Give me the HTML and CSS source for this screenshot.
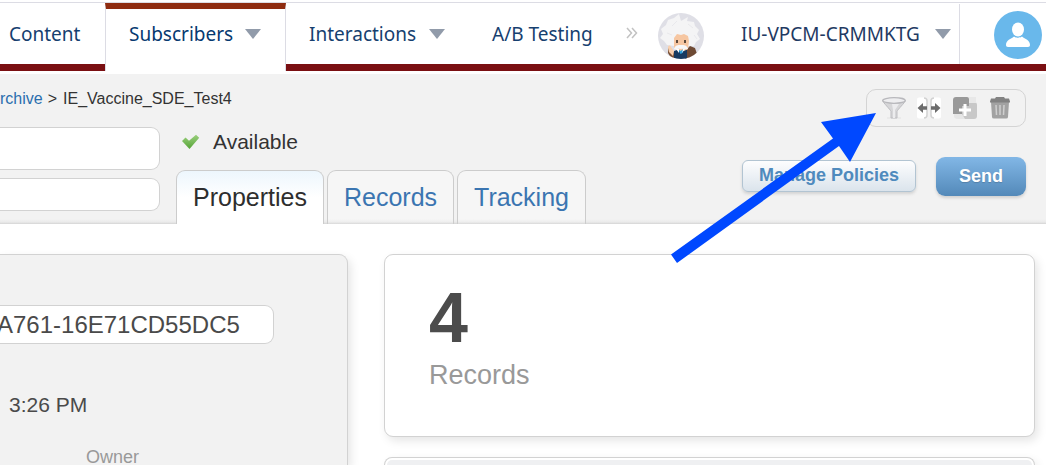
FILE: index.html
```html
<!DOCTYPE html>
<html lang="en">
<head>
<meta charset="utf-8">
<title>IE_Vaccine_SDE_Test4</title>
<link rel="stylesheet" href="styles.css">
</head>
<body>
<div class="page">
  <nav class="nav">
    <a class="nav-item nav-first" href="#">Content</a>
    <a class="nav-item nav-active" href="#">Subscribers <span class="caret"></span></a>
    <a class="nav-item nav-drop" href="#">Interactions <span class="caret"></span></a>
    <a class="nav-item nav-plain" href="#">A/B Testing</a>
    <div class="nav-item nav-end">
      <button class="more" type="button" aria-label="More">
        <svg width="12" height="13" viewBox="0 0 12 13"><path d="M1 1l4.500 5L1 11M6 1l4.500 5L6 11" fill="none" stroke="#c2c2c2" stroke-width="1.500"/></svg>
      </button>
      <svg class="avatar" width="46" height="46" viewBox="0 0 46 46">
        <defs><clipPath id="disc"><circle cx="23" cy="23" r="23"/></clipPath></defs>
        <circle cx="23" cy="23" r="23" fill="#dfdfe6"/>
        <g clip-path="url(#disc)">
          <path d="M27 46l1-9 4-4 5 2 2 6-4 5z" fill="#6e4a34"/>
          <path d="M10 34l4 3 3 4v4h-4l-3-5z" fill="#7a5238"/>
          <path d="M16 38l6-2 7 1v10H16z" fill="#173a60"/>
          <path d="M21 1l2 7 7-4-1 4 7 1 1 4 4 4-2 4 3 5-4 3-2 4-7 0-13 0-7-1-3-4-4-3 3-4-2-5 5-4 2-5 6-2z" fill="#f4f4f5"/>
          <path d="M14 13l5-5M30 11l5 4M9 20l5 2M36 22l3 4" stroke="#e8e8ec" fill="none"/>
          <path d="M16 25l3-4 4 1 3-1 4 2 1 5-1 8-4 2h-5l-5-3z" fill="#f6c6a1"/>
          <rect x="18" y="27" width="2" height="3" fill="#5e4a3c"/>
          <rect x="26" y="27" width="2" height="3" fill="#5e4a3c"/>
          <path d="M16 36c1-4 4-4 7-4s6 0 7 4c-2 1-5-1-7 0-3-1-5 1-7 0z" fill="#f7f7f8"/>
          <path d="M10 35c0-3 2-3 3-1l3 4-1 5-4-4z" fill="#f9d0ae"/>
          <path d="M20 36l2.500 2 3-2-1 4-2 1z" fill="#2aa0dc"/>
          <path d="M18 36h3l0 4zM27 36h-2l-1 4z" fill="#fff"/>
        </g>
      </svg>
      <button class="account" type="button">IU-VPCM-CRMMKTG <span class="caret"></span></button>
      <span class="rule"></span>
      <svg class="user" width="48" height="48" viewBox="0 0 48 48">
        <circle cx="24" cy="24" r="24" fill="#69b8eb"/>
        <ellipse cx="24" cy="18.500" rx="6" ry="7" fill="#fff"/>
        <path d="M12 34c0-5 5-6 8-8.500 2 1.600 6 1.600 8 0 3 2.500 8 3.500 8 8.500 0 1.300-.7 2-2 2H14c-1.300 0-2-.7-2-2z" fill="#fff"/>
      </svg>
    </div>
  </nav>

  <header class="head">
    <div class="head-main">
      <div class="crumbs"><a href="#">rchive</a><span class="sep">&gt;</span><span>IE_Vaccine_SDE_Test4</span></div>
      <div class="head-row">
        <div class="fields">
          <input class="field field-name" type="text" aria-label="Name">
          <input class="field field-desc" type="text" aria-label="Description">
        </div>
        <div class="head-side">
          <div class="status">
            <svg width="18" height="16" viewBox="0 0 18 16"><defs><linearGradient id="ok" x1="0" y1="0" x2="0" y2="1"><stop offset="0" stop-color="#9bd07e"/><stop offset="1" stop-color="#55a336"/></linearGradient></defs><path d="M0 7L3.500 3.500l3.500 3.200L14 0.700l3.200 3L7.500 15z" fill="url(#ok)"/></svg>
            <span>Available</span>
          </div>
          <div class="tabs">
            <button class="tab tab-on" type="button">Properties</button>
            <button class="tab" type="button">Records</button>
            <button class="tab" type="button">Tracking</button>
          </div>
        </div>
      </div>
    </div>
    <div class="head-actions">
      <div class="tools">
        <button type="button" aria-label="Filter"><svg width="24" height="22" viewBox="0 0 24 22"><path d="M5 21h14" stroke="#e2e2e2"/><path d="M0.700 3.500c0 2 7.800 9 8.300 11V21h6v-6.500c.5-2 8.300-9 8.300-11z" fill="#d6d6d8" stroke="#bdbdc1"/><path d="M11 13v8h2v-8l4-6h-7z" fill="#ececee"/><ellipse cx="12" cy="3.500" rx="11.300" ry="2.800" fill="#eeeef0" stroke="#b8b8bc" stroke-width="1.300"/></svg></button>
        <button type="button" aria-label="Split"><svg width="24" height="22" viewBox="0 0 24 22"><rect x="0" y="0.500" width="10" height="21" rx="2" fill="#fff"/><rect x="14" y="0.500" width="10" height="21" rx="2" fill="#fff"/><path d="M7 1q3 0 3 3v14q0 3-3 3M17 1q-3 0-3 3v14q0 3 3 3" fill="none" stroke="#d2d2d2" stroke-width="1.500"/><path d="M0.500 11l5.500-5v3.300h4v3.400H6V16zM23.500 11l-5.500-5v3.300h-4v3.400h4V16z" fill="#6c6c6c"/></svg></button>
        <button type="button" aria-label="Copy"><svg width="24" height="22" viewBox="0 0 24 22"><rect x="6" y="5" width="18" height="17" rx="3" fill="#c8c8c8"/><path d="M16 0h7v6h-7z" fill="#e8e8e8"/><path d="M3 0h11q2 0 2 2v7H9v8H0V3q0-3 3-3z" fill="#999"/><path d="M1 17h8l3 5H5q-4 0-4-3z" fill="#e6e6e6"/><path d="M12 7v12M6 13h12" stroke="#fff" stroke-width="3"/></svg></button>
        <button type="button" aria-label="Delete"><svg width="24" height="22" viewBox="0 0 24 22"><path d="M3 5h18l-1 15q0 1.500-2 1.500H6q-2 0-2-1.500z" fill="#a2a2a2"/><path d="M3 1.500h4L8 0h8l1 1.500h4l1 3v1H2v-1z" fill="#828282"/><path d="M8 8l.5 10M12 8v10M16 8l-.5 10" stroke="#cfcfcf" stroke-width="1.500"/></svg></button>
      </div>
      <div class="buttons">
        <button class="btn-policies" type="button">Manage Policies</button>
        <button class="btn-send" type="button">Send</button>
      </div>
    </div>
  </header>

  <main class="content">
    <section class="card details">
      <input class="key" type="text" value="A761-16E71CD55DC5" aria-label="External key">
      <div class="time">3:26 PM</div>
      <div class="owner">Owner</div>
    </section>
    <div class="stats">
      <section class="card count">
        <div class="number">4</div>
        <div class="caption">Records</div>
      </section>
      <section class="card panel"><div class="panel-head"></div></section>
    </div>
  </main>

  <svg class="pointer" width="206" height="152" viewBox="0 0 206 152"><path d="M206 0L151 9l12 16.500L1 141.500l6 8.500L169 33l11 16z" fill="#0048ff"/></svg>
</div>
</body>
</html>
```
FILE: styles.css
```css
* { box-sizing: border-box; }
body { margin: 0; background: #fff; font-family: "Liberation Sans", Arial, sans-serif; color: #333; }
button { border: 0; padding: 0; margin: 0; background: none; font: inherit; color: inherit; cursor: pointer; }
input { font: inherit; }
a { text-decoration: none; color: #2a6eae; }
svg { display: block; flex: none; }
.page { position: relative; height: 100vh; overflow: hidden; display: flex; flex-direction: column; }

.nav { display: flex; flex: none; margin-top: 2px; border-top: 1px solid #dcdce4; font: 19px/24px "Noto Sans", sans-serif; }
.nav-item { display: flex; align-items: center; height: 68px; border-bottom: 7px solid #7a0f12; color: #16406f; white-space: nowrap; }
.nav-first { width: 105px; padding-left: 9px; }
.nav-active { width: 181px; padding: 0 0 13px 23px; gap: 12px; border: 1px solid #dcdce4; border-top: 6px solid #8f2c10; border-bottom: 0; background: #fff; color: #063970; }
.nav-drop { width: 182px; padding-left: 23px; gap: 13px; }
.nav-plain { width: 136px; padding-left: 24px; }
.nav-end { flex: 1; padding: 0 4px 0 22px; }
.caret { border: 8px solid transparent; border-top: 10px solid #919baa; border-bottom: 0; }
.avatar { margin: 4px 37px 0 20px; }
.account { display: flex; align-items: center; justify-content: space-between; width: 210px; color: #1f3a63; }
.rule { width: 1px; height: 60px; background: #dcdce4; margin-left: 8px; }
.user { margin: 3px 0 0 auto; }

.head { display: flex; flex: none; justify-content: space-between; margin-top: 3px; padding: 15px 20px 0 0; background: linear-gradient(to top, #d4d4d4 0, #ebebeb 2px, #f2f2f2 5px); }
.crumbs { display: flex; height: 19px; line-height: 19px; font-size: 16px; }
.sep { margin: 0 6px 0 5px; }
.head-row { display: flex; gap: 16px; margin-top: 19px; }
.fields { display: flex; flex-direction: column; gap: 8px; width: 160px; }
.field { width: 100%; border: 1px solid #d2d2d2; border-left: 0; border-radius: 0 9px 9px 0; background: #fff; }
.field-name { height: 43px; }
.field-desc { height: 33px; }
.status { display: flex; align-items: center; gap: 13px; height: 30px; padding-left: 6px; font-size: 21px; }
.tabs { display: flex; gap: 3px; margin-top: 13px; }
.tab { height: 54px; padding: 0 16px; border: 1px solid #ccc; border-bottom: 0; border-radius: 9px 9px 0 0; background: linear-gradient(to top, #d8d8d8 0, #eee 2px, #f6f6f6 5px); font-size: 25px; color: #3b75b1; }
.tab-on { background: linear-gradient(#edf6fd, #fff 50%); color: #2e2e2e; }
.tools { display: flex; justify-content: space-between; width: 160px; height: 38px; padding: 7px 13px 0 15px; margin-left: auto; border: 1px solid #d4d4d4; border-radius: 10px; }
.buttons { display: flex; gap: 20px; margin-top: 30px; }
.tools button { align-self: flex-start; }
.buttons button { white-space: nowrap; font-weight: bold; font-size: 18px; }
.btn-policies { height: 32px; margin-top: 3px; padding: 0 16px 2px; border: 1px solid #b2c4d2; border-radius: 6px; background: linear-gradient(#fdfdfe, #dbe4ec); box-shadow: 0 2px 3px #d3d3d3; }
.buttons .btn-policies { color: #4f8abd; }
.btn-send { width: 90px; height: 39px; border-radius: 9px; background: linear-gradient(#82b7e6, #5389b9); box-shadow: 0 2px 3px #d0d0d0; }
.buttons .btn-send { color: #fff; text-shadow: 0 1px 1px #5580a8; }

.content { display: flex; flex: 1; gap: 36px; padding: 30px 11px 0 0; min-height: 0; }
.card { border: 1px solid #d2d2d2; border-radius: 9px; background: #fff; box-shadow: 3px 4px 10px #e6e6e6; }
.details { flex: none; width: 348px; padding-top: 50px; border-left: 0; border-bottom: 0; border-radius: 0 9px 0 0; background: #f2f2f2; color: #4a4a4a; }
.key { display: block; width: 274px; height: 39px; padding: 0; border: 1px solid #d2d2d2; border-left: 0; border-radius: 0 9px 9px 0; background: #fff; font-size: 24px; color: #4a4a4a; text-indent: -3px; }
.time { margin: 49px 0 0 9px; font-size: 21px; line-height: 24px; }
.owner { margin: 32px 0 0 86px; font-size: 18px; line-height: 16px; color: #999; }
.stats { flex: 1; display: flex; flex-direction: column; gap: 20px; }
.count { flex: none; padding: 23px 44px 44px; }
.number { font-size: 70px; line-height: 80px; font-weight: bold; color: #4c4c4c; }
.caption { font-size: 27px; line-height: 34px; color: #999; }
.panel { flex: 1; padding: 2px 2px 0; border-bottom: 0; border-radius: 9px 9px 0 0; }
.panel-head { height: 100%; border-radius: 7px 7px 0 0; background: #eff0f2; }
.pointer { position: absolute; left: 670px; top: 113px; pointer-events: none; }
```
